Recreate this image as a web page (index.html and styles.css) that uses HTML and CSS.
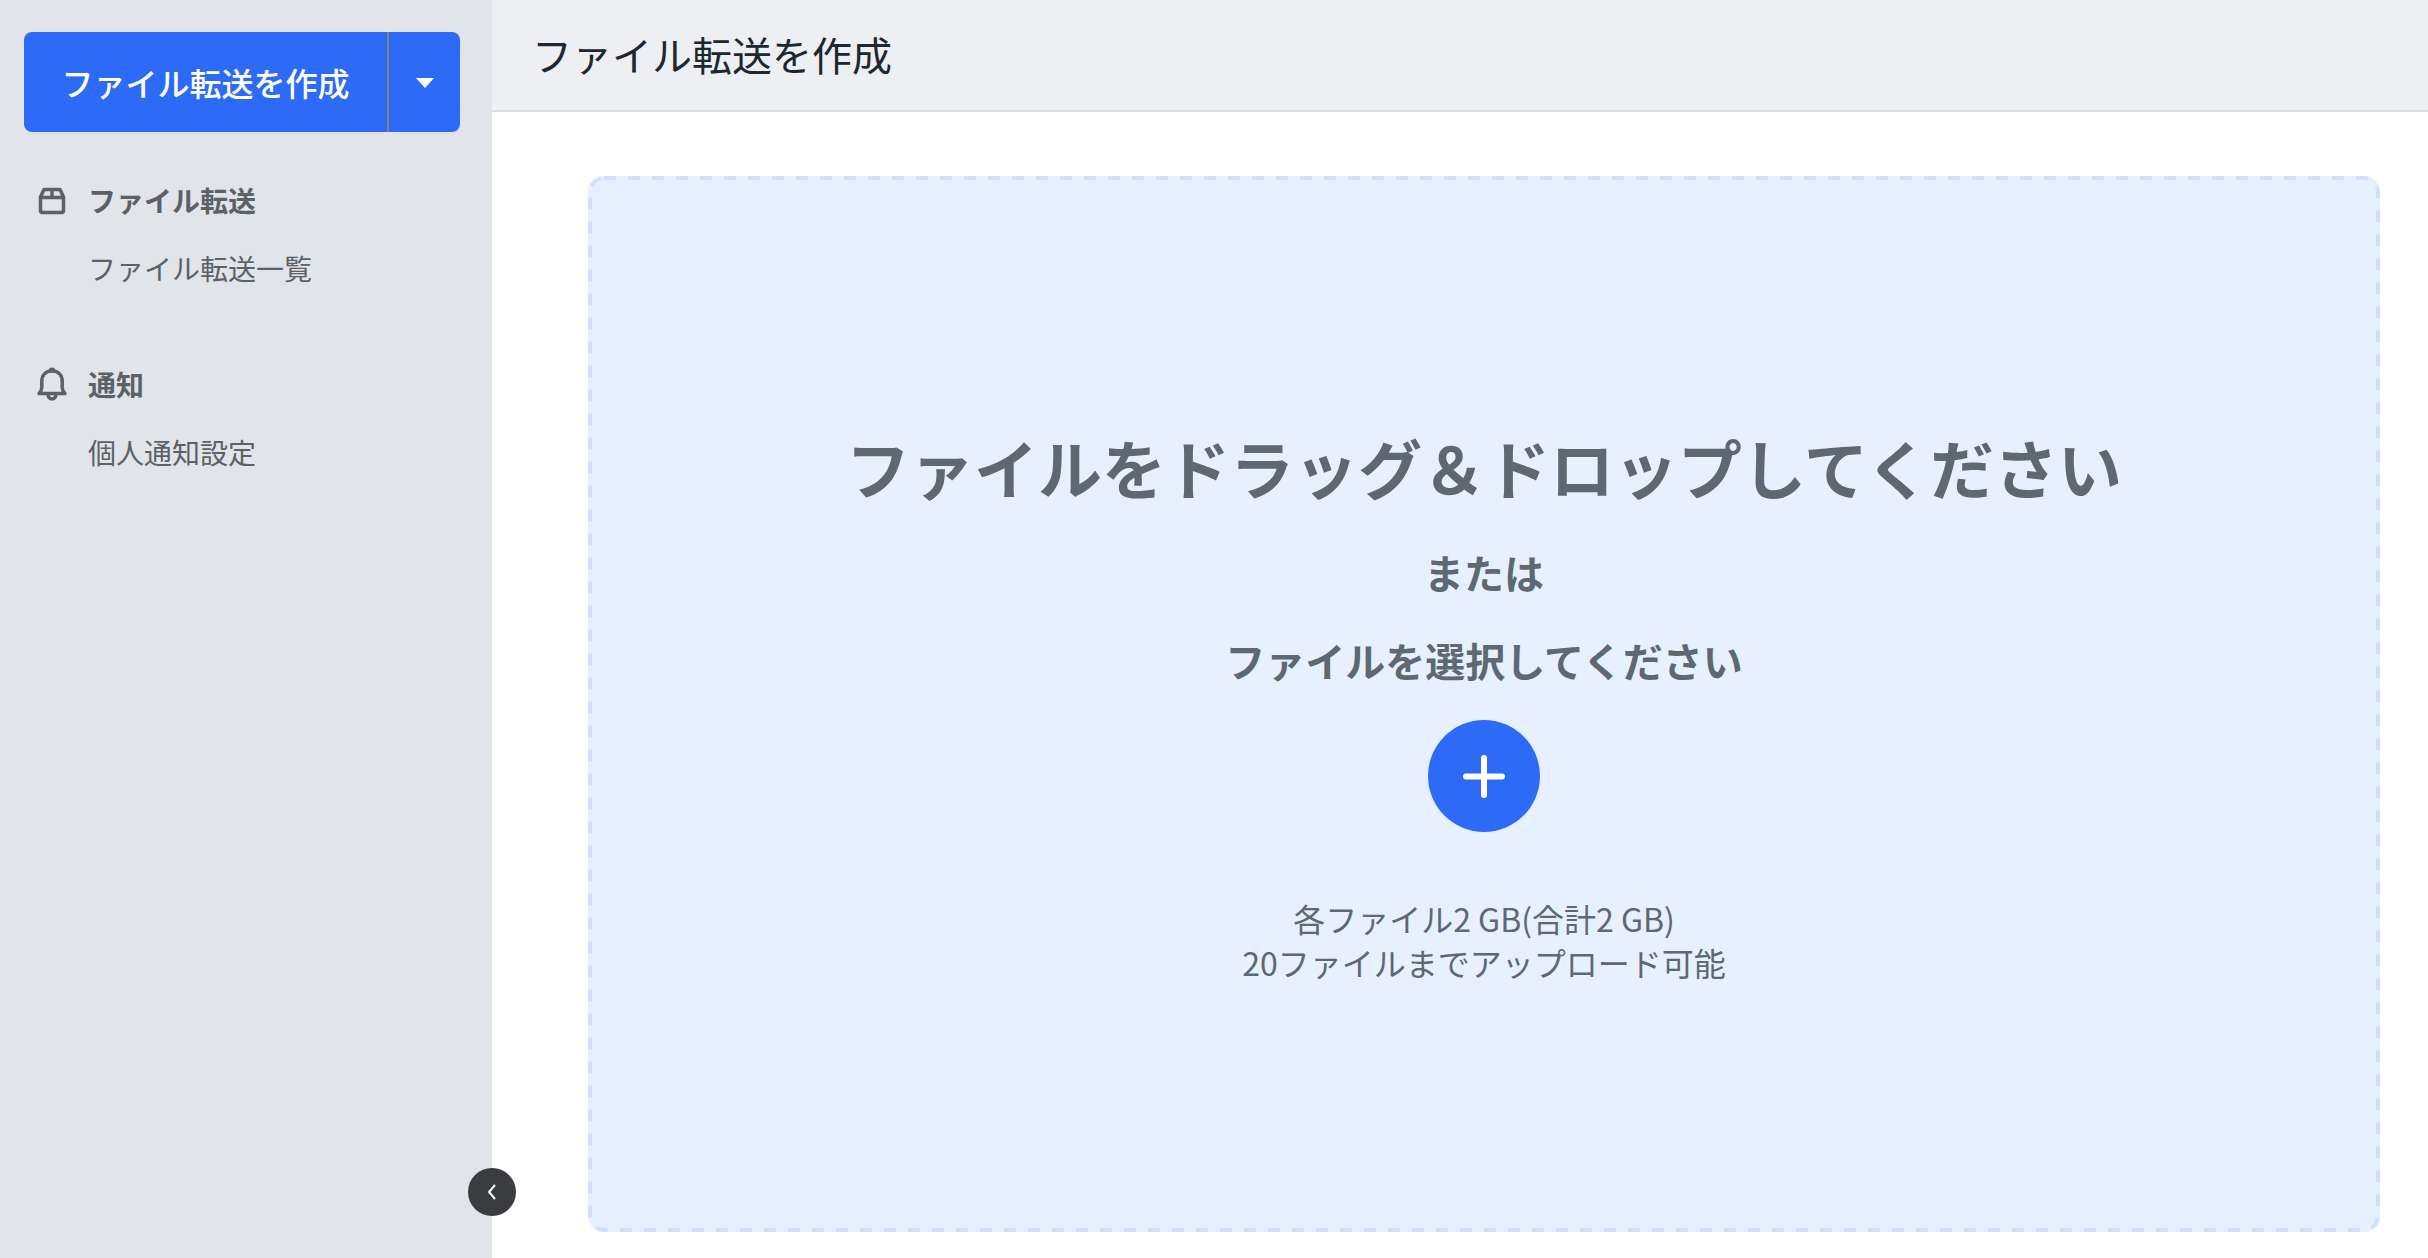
FILE: index.html
```
<!DOCTYPE html>
<html lang="ja">
<head>
    <meta charset="UTF-8">
    <meta name="viewport" content="width=device-width, initial-scale=1.0">
    <title>ファイル転送を作成</title>
    <link rel="stylesheet" href="styles.css">
</head>
<body>
    <div class="app">
        <aside class="sidebar">
            <div class="split-button">
                <button type="button" class="create-button">ファイル転送を作成</button>
                <button type="button" class="create-menu" aria-label="メニュー">
                    <svg width="18" height="12" viewBox="0 -2 18 12"><path d="M0 0h18L9 10z" fill="currentColor"/></svg>
                </button>
            </div>

            <nav>
                <section class="nav-group">
                    <h2>
                        <svg width="32" height="32" viewBox="0 -2 32 32" fill="none" stroke="currentColor" stroke-width="3.500" stroke-linejoin="round">
                            <path d="M4.500 11L8 3.500h16l3.500 7.500V25a1.500 1.500 0 0 1-1.500 1.500H6A1.500 1.500 0 0 1 4.500 25z"/>
                            <path d="M4.500 11.500h23M16 3.500v8"/>
                        </svg>
                        ファイル転送
                    </h2>
                    <a href="#">ファイル転送一覧</a>
                </section>

                <section class="nav-group">
                    <h2>
                        <svg width="32" height="36" viewBox="0 0 32 36" fill="none" stroke="currentColor" stroke-width="3.500">
                            <path d="M3 27.500c2-2 2.800-3.500 2.800-6v-6C5.800 9 10 5 16 5s10.200 4 10.200 10.500v6c0 2.500.8 4 2.800 6z" stroke-linejoin="round"/>
                            <path d="M12.500 5a3.500 3.500 0 0 1 7 0z" fill="currentColor" stroke="none"/>
                            <path d="M12 28.500c0 6 8 6 8 0"/>
                        </svg>
                        通知
                    </h2>
                    <a href="#">個人通知設定</a>
                </section>
            </nav>

            <button type="button" class="collapse" aria-label="サイドバーを閉じる">
                <svg width="10" height="16" viewBox="0 0 10 16" fill="none" stroke="currentColor" stroke-width="2"><path d="M8 1L2 8l6 7"/></svg>
            </button>
        </aside>

        <div class="content">
            <header class="page-header">
                <h1>ファイル転送を作成</h1>
            </header>

            <main>
                <div class="dropzone">
                    <svg class="dash-border"><rect x="2" y="2" rx="14"/></svg>
                    <p class="drop-title">ファイルをドラッグ＆ドロップしてください</p>
                    <p class="drop-text">または</p>
                    <p class="drop-text">ファイルを選択してください</p>
                    <button type="button" class="add-button" aria-label="ファイルを選択">
                        <svg width="42" height="44" viewBox="0 0 42 44" stroke="currentColor" stroke-width="6" stroke-linecap="round"><path d="M21 4v37M3 22.500h36"/></svg>
                    </button>
                    <p class="drop-note">各ファイル2 GB(合計2 GB)<br>20ファイルまでアップロード可能</p>
                </div>
            </main>
        </div>
    </div>
</body>
</html>
```
FILE: styles.css
```
:root {
    --primary: #2d6bf6;
    --sidebar: #e1e4e8;
    --nav-text: #5c6166;
    --drop-text: #5e6870;
    --drop-bg: #e6f0ff;
    --drop-border: #cfe0fc;
}

* {
    box-sizing: border-box;
}

body {
    font-family: 'Noto Sans CJK JP', sans-serif;
    margin: 0;
    background: white;
}

h1, h2, p {
    margin: 0;
}

button {
    font-family: inherit;
    border: none;
    padding: 0;
    color: white;
    cursor: pointer;
}

.app {
    display: flex;
    min-height: 100vh;
}

.sidebar {
    position: relative;
    flex: 0 0 492px;
    padding: 32px 32px 32px 24px;
    background: var(--sidebar);
}

.split-button {
    display: flex;
    height: 100px;
    margin-bottom: 38px;
    border-radius: 8px;
    overflow: hidden;
}

.create-button {
    flex: 1;
    background: var(--primary);
    font-size: 32px;
    font-weight: 500;
}

.create-menu {
    display: flex;
    align-items: center;
    justify-content: center;
    width: 73px;
    background: var(--primary);
    border-left: 2px solid #808080;
}

.nav-group {
    padding-left: 12px;
    margin-bottom: 56px;
    color: var(--nav-text);
    font-size: 28px;
    line-height: 60px;
}

.nav-group h2 {
    display: flex;
    align-items: center;
    gap: 20px;
    margin-bottom: 8px;
    font-size: 28px;
    font-weight: 700;
}

.nav-group a {
    display: block;
    padding-left: 52px;
    color: inherit;
    text-decoration: none;
}

.collapse {
    position: absolute;
    right: -24px;
    bottom: 42px;
    display: flex;
    align-items: center;
    justify-content: center;
    width: 48px;
    height: 48px;
    border-radius: 50%;
    background: #3a3c40;
}

.content {
    flex: 1;
    display: flex;
    flex-direction: column;
}

.page-header {
    display: flex;
    align-items: center;
    height: 112px;
    padding: 0 40px 2px;
    background: #edeff3;
    border-bottom: 2px solid #dcdddf;
}

.page-header h1 {
    color: #20262d;
    font-size: 40px;
    font-weight: 400;
}

main {
    flex: 1;
    display: flex;
    padding: 64px 48px 26px 96px;
}

.dropzone {
    position: relative;
    flex: 1;
    display: flex;
    flex-direction: column;
    align-items: center;
    justify-content: center;
    padding-bottom: 6px;
    border-radius: 16px;
    background: var(--drop-bg);
    color: var(--drop-text);
    text-align: center;
}

/* 12px dashes, longer than the ones border-style draws */
.dash-border {
    position: absolute;
    inset: 0;
    width: 100%;
    height: 100%;
    pointer-events: none;
}

.dash-border rect {
    width: calc(100% - 4px);
    height: calc(100% - 4px);
    fill: none;
    stroke: var(--drop-border);
    stroke-width: 4px;
    stroke-dasharray: 12 12;
}

.drop-title {
    margin-bottom: 28px;
    font-size: 64px;
    font-weight: 700;
    line-height: 96px;
}

.drop-text {
    margin-bottom: 28px;
    font-size: 40px;
    font-weight: 700;
    line-height: 60px;
}

.add-button {
    display: flex;
    align-items: center;
    justify-content: center;
    width: 112px;
    height: 112px;
    margin-top: 2px;
    margin-bottom: 64px;
    border-radius: 50%;
    background: var(--primary);
}

.drop-note {
    font-size: 32px;
    line-height: 44px;
}
```
